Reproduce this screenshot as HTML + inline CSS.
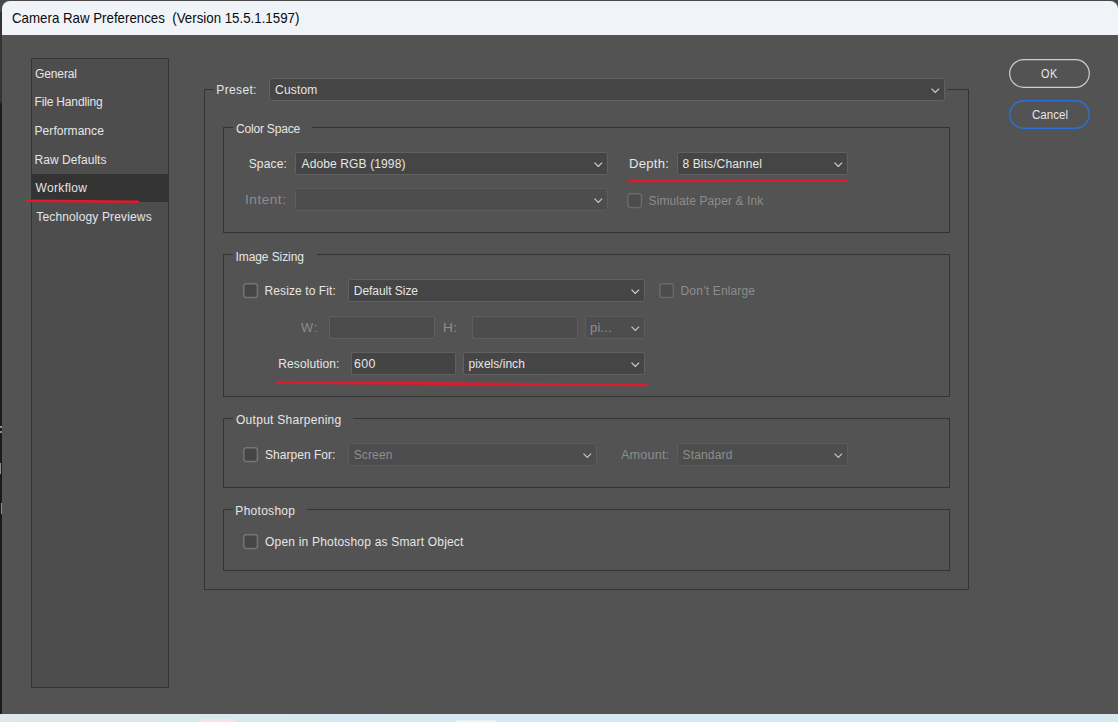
<!DOCTYPE html>
<html>
<head>
<meta charset="utf-8">
<title>Camera Raw Preferences</title>
<style>
html,body{margin:0;padding:0;}
body{width:1118px;height:722px;overflow:hidden;background:#484848;position:relative;
  font-family:"Liberation Sans",sans-serif;font-size:12px;color:#e6e6e6;}
.abs,.t,.dd,.inp,.cb,.grp,.gap,.btn{position:absolute;box-sizing:border-box;}
#leftedge{left:0;top:12px;width:2px;height:702px;background:linear-gradient(180deg,#333 0,#333 90px,#1b1b1b 92px);}
#leftedge i{position:absolute;left:0;width:2px;background:#8e8e8e;}
#bottom{left:0;top:714px;width:1118px;height:8px;background:linear-gradient(90deg,#dde7ec,#d7e8f0 40%,#d6e8f0);}
#win{left:2px;top:1px;width:1116px;height:713px;background:#535353;border-radius:8px 8px 0 0;overflow:hidden;}
#title{left:0;top:0;width:1116px;height:34px;background:#f0f4f9;}
.t{white-space:pre;line-height:16px;height:16px;}
.t.ttl{color:#0a0a0a;font-size:14.4px;}
.t.btxt{font-size:12.5px;}
.t.dis{color:#8d8d8d;}
#side{left:31px;top:58px;width:138px;height:630px;border:1px solid #343434;background:#4d4d4d;}
#sel{left:32px;top:174px;width:136px;height:28px;background:#333;}
.grp{border:1px solid #343434;}
.gap{background:#535353;}
.dd{background:#454545;border:1px solid #616161;border-radius:2.5px;}
.dd.d{background:#4d4d4d;border-color:#5c5c5c;}
.inp{background:#444;border:1px solid #5f5f5f;border-radius:1px;}
.inp.d{background:#4c4c4c;border-color:#5e5e5e;}
.cb{width:15px;height:15px;border:1px solid #7e7e7e;border-radius:3px;background:#454545;}
.cb.d{border-color:#6c6c6c;background:#4c4c4c;}
.dd svg{position:absolute;right:4px;top:50%;margin-top:-2px;width:9px;height:6px;}
.btn{width:81px;height:29px;border-radius:14.5px;}
svg.red{position:absolute;left:0;top:0;width:1118px;height:722px;pointer-events:none;}
</style>
</head>
<body>
<div class="abs" id="leftedge"><i style="top:414px;height:2px"></i><i style="top:419px;height:2px"></i><i style="top:451px;height:11px;width:1px;left:0"></i><i style="top:491px;height:11px;width:1px;left:1px"></i></div>
<div class="abs" id="bottom"><div class="abs" style="left:199px;top:5px;width:37px;height:6px;border-radius:4px 4px 0 0;background:#fbe1e4;"></div><div class="abs" style="left:455px;top:6px;width:42px;height:5px;border-radius:4px 4px 0 0;background:#e9f3f8;"></div></div>
<div class="abs" id="win"><div class="abs" id="title"></div></div>
<div class="abs" id="side"></div>
<div class="abs" id="sel"></div>
<div class="grp" id="g0" style="left:204px;top:89px;width:765px;height:501px;"></div><div class="gap" style="left:214px;top:89px;width:755px;height:1px;"></div>
<div class="abs" id="g0r" style="left:947px;top:89px;width:22px;height:1px;background:#343434;"></div>
<div class="dd" id="ddpreset" style="left:269px;top:78px;width:676px;height:23px;"><svg viewBox="0 0 9 6"><path d="M0.5 0.7 L4.3 4.4 L8.1 0.7" fill="none" stroke="#d6d6d6" stroke-width="1.12"/></svg></div>
<div class="grp" id="g1" style="left:223px;top:127px;width:727px;height:106px;"></div><div class="gap" style="left:233px;top:127px;width:79px;height:1px;"></div>
<div class="dd" id="ddspace" style="left:295px;top:152px;width:313px;height:23px;"><svg viewBox="0 0 9 6"><path d="M0.5 0.7 L4.3 4.4 L8.1 0.7" fill="none" stroke="#d6d6d6" stroke-width="1.12"/></svg></div>
<div class="dd" id="dddepth" style="left:677px;top:152px;width:171px;height:23px;"><svg viewBox="0 0 9 6"><path d="M0.5 0.7 L4.3 4.4 L8.1 0.7" fill="none" stroke="#d6d6d6" stroke-width="1.12"/></svg></div>
<div class="dd d" id="ddintent" style="left:295px;top:188px;width:313px;height:23px;"><svg viewBox="0 0 9 6"><path d="M0.5 0.7 L4.3 4.4 L8.1 0.7" fill="none" stroke="#cacaca" stroke-width="1.12"/></svg></div>
<svg class="abs" id="cbsim" style="left:627px;top:193px;width:16px;height:16px;" viewBox="0 0 16 16"><rect x="0.8" y="0.8" width="13.6" height="13.6" rx="2.3" fill="#4c4c4c" stroke="#696969" stroke-width="1.5"/></svg>
<div class="grp" id="g2" style="left:223px;top:254px;width:727px;height:143px;"></div><div class="gap" style="left:233px;top:254px;width:84px;height:1px;"></div>
<svg class="abs" id="cbresize" style="left:243px;top:283px;width:16px;height:16px;" viewBox="0 0 16 16"><rect x="0.8" y="0.8" width="13.6" height="13.6" rx="2.3" fill="#454545" stroke="#757575" stroke-width="1.5"/></svg>
<div class="dd" id="dddefault" style="left:348px;top:279px;width:297px;height:23px;"><svg viewBox="0 0 9 6"><path d="M0.5 0.7 L4.3 4.4 L8.1 0.7" fill="none" stroke="#d6d6d6" stroke-width="1.12"/></svg></div>
<svg class="abs" id="cbdont" style="left:659px;top:283px;width:16px;height:16px;" viewBox="0 0 16 16"><rect x="0.8" y="0.8" width="13.6" height="13.6" rx="2.3" fill="#4c4c4c" stroke="#696969" stroke-width="1.5"/></svg>
<div class="inp d" id="inw" style="left:329px;top:316px;width:106px;height:23px;"></div>
<div class="inp d" id="inh" style="left:472px;top:316px;width:106px;height:23px;"></div>
<div class="dd d" id="ddpi" style="left:585px;top:316px;width:60px;height:23px;"><svg viewBox="0 0 9 6"><path d="M0.5 0.7 L4.3 4.4 L8.1 0.7" fill="none" stroke="#cacaca" stroke-width="1.12"/></svg></div>
<div class="inp" id="inres" style="left:351px;top:352px;width:105px;height:23px;"></div>
<div class="dd" id="ddppi" style="left:463px;top:352px;width:182px;height:23px;"><svg viewBox="0 0 9 6"><path d="M0.5 0.7 L4.3 4.4 L8.1 0.7" fill="none" stroke="#d6d6d6" stroke-width="1.12"/></svg></div>
<div class="grp" id="g3" style="left:223px;top:418px;width:727px;height:70px;"></div><div class="gap" style="left:233px;top:418px;width:120px;height:1px;"></div>
<svg class="abs" id="cbsharp" style="left:243px;top:447px;width:16px;height:16px;" viewBox="0 0 16 16"><rect x="0.8" y="0.8" width="13.6" height="13.6" rx="2.3" fill="#454545" stroke="#757575" stroke-width="1.5"/></svg>
<div class="dd d" id="ddscreen" style="left:348px;top:443px;width:249px;height:23px;"><svg viewBox="0 0 9 6"><path d="M0.5 0.7 L4.3 4.4 L8.1 0.7" fill="none" stroke="#cacaca" stroke-width="1.12"/></svg></div>
<div class="dd d" id="ddstd" style="left:677px;top:443px;width:171px;height:23px;"><svg viewBox="0 0 9 6"><path d="M0.5 0.7 L4.3 4.4 L8.1 0.7" fill="none" stroke="#cacaca" stroke-width="1.12"/></svg></div>
<div class="grp" id="g4" style="left:223px;top:509px;width:727px;height:62px;"></div><div class="gap" style="left:233px;top:509px;width:74px;height:1px;"></div>
<svg class="abs" id="cbopen" style="left:243px;top:534px;width:16px;height:16px;" viewBox="0 0 16 16"><rect x="0.8" y="0.8" width="13.6" height="13.6" rx="2.3" fill="#454545" stroke="#757575" stroke-width="1.5"/></svg>
<svg class="abs" id="ok" style="left:1008px;top:58px;width:83px;height:31px;" viewBox="0 0 83 31"><rect x="1.7" y="1.7" width="79.6" height="27.6" rx="13.8" fill="none" stroke="#cecece" stroke-width="1.2"/></svg>
<svg class="abs" id="cancel" style="left:1008px;top:99px;width:83px;height:31px;" viewBox="0 0 83 31"><rect x="1.75" y="1.75" width="79.5" height="27.5" rx="13.75" fill="none" stroke="#2b6fdb" stroke-width="1.45"/></svg>
<div class="t ttl" id="titletxt" style="left:12.00px;top:10px;letter-spacing:0.000px;transform:scaleX(0.9235);transform-origin:0 0;">Camera Raw Preferences  (Version 15.5.1.1597)</div>
<div class="t " id="s1" style="left:35.05px;top:66px;letter-spacing:-0.125px;">General</div>
<div class="t " id="s2" style="left:34.55px;top:94px;letter-spacing:-0.169px;">File Handling</div>
<div class="t " id="s3" style="left:34.55px;top:123px;letter-spacing:0.060px;">Performance</div>
<div class="t " id="s4" style="left:34.55px;top:152px;letter-spacing:0.055px;">Raw Defaults</div>
<div class="t " id="s5" style="left:35.55px;top:180px;letter-spacing:0.335px;">Workflow</div>
<div class="t " id="s6" style="left:36.30px;top:209px;letter-spacing:0.145px;">Technology Previews</div>
<div class="t " id="preset" style="left:216.35px;top:82px;letter-spacing:0.348px;">Preset:</div>
<div class="t " id="custom" style="left:275.05px;top:82px;letter-spacing:0.190px;">Custom</div>
<div class="t " id="g1l" style="left:236.00px;top:121px;letter-spacing:-0.190px;">Color Space</div>
<div class="t " id="g2l" style="left:235.50px;top:249px;letter-spacing:-0.084px;">Image Sizing</div>
<div class="t " id="g3l" style="left:236.00px;top:412px;letter-spacing:0.279px;">Output Sharpening</div>
<div class="t " id="g4l" style="left:235.35px;top:503px;letter-spacing:0.281px;">Photoshop</div>
<div class="t " id="space" style="left:248.65px;top:156px;letter-spacing:0.170px;">Space:</div>
<div class="t " id="adobe" style="left:301.55px;top:156px;letter-spacing:0.124px;">Adobe RGB (1998)</div>
<div class="t " id="depth" style="left:629.00px;top:156px;letter-spacing:0.236px;transform:scaleX(1.09);transform-origin:0 0;">Depth:</div>
<div class="t " id="bits" style="left:682.55px;top:156px;letter-spacing:0.103px;">8 Bits/Channel</div>
<div class="t dis" id="intent" style="left:245.00px;top:192px;letter-spacing:0.479px;transform:scaleX(1.13);transform-origin:0 0;">Intent:</div>
<div class="t dis" id="simulate" style="left:648.60px;top:193px;letter-spacing:0.097px;">Simulate Paper &amp; Ink</div>
<div class="t " id="resize" style="left:264.55px;top:283px;letter-spacing:0.096px;">Resize to Fit:</div>
<div class="t " id="defsize" style="left:353.75px;top:283px;letter-spacing:-0.039px;">Default Size</div>
<div class="t dis" id="dont" style="left:680.55px;top:283px;letter-spacing:0.146px;">Don’t Enlarge</div>
<div class="t dis" id="wl" style="left:301.00px;top:320px;letter-spacing:0.701px;transform:scaleX(1.07);transform-origin:0 0;">W:</div>
<div class="t dis" id="hl" style="left:443.00px;top:320px;letter-spacing:0.264px;transform:scaleX(1.14);transform-origin:0 0;">H:</div>
<div class="t dis" id="pi" style="left:590.00px;top:320px;letter-spacing:0.211px;transform:scaleX(1.08);transform-origin:0 0;">pi...</div>
<div class="t " id="resolution" style="left:278.25px;top:356px;letter-spacing:0.115px;">Resolution:</div>
<div class="t " id="v600" style="left:354.00px;top:356px;letter-spacing:0.390px;transform:scaleX(1.03);transform-origin:0 0;">600</div>
<div class="t " id="ppi" style="left:468.45px;top:356px;letter-spacing:0.035px;">pixels/inch</div>
<div class="t " id="sharpen" style="left:265.05px;top:447px;letter-spacing:0.029px;">Sharpen For:</div>
<div class="t dis" id="screen" style="left:353.65px;top:447px;letter-spacing:0.150px;">Screen</div>
<div class="t dis" id="amount" style="left:621.40px;top:447px;letter-spacing:0.118px;transform:scaleX(1.06);transform-origin:0 0;">Amount:</div>
<div class="t dis" id="standard" style="left:682.60px;top:447px;letter-spacing:0.147px;">Standard</div>
<div class="t " id="open" style="left:265.05px;top:534px;letter-spacing:0.195px;">Open in Photoshop as Smart Object</div>
<div class="t btxt" id="oktxt" style="left:1040.50px;top:66px;letter-spacing:0.634px;transform:scaleX(0.87);transform-origin:0 0;">OK</div>
<div class="t btxt" id="canceltxt" style="left:1031.60px;top:107px;letter-spacing:0.044px;transform:scaleX(0.92);transform-origin:0 0;">Cancel</div>
<svg class="red" viewBox="0 0 1118 722">
  <path d="M27.6 200.7 L138 201.7" stroke="#e2192e" stroke-width="2.4" stroke-linecap="round" fill="none"/>
  <path d="M628.8 180.9 L846.7 180.5" stroke="#e2192e" stroke-width="2.7" stroke-linecap="round" fill="none"/>
  <path d="M276.7 382.4 L645.7 385.0" stroke="#e2192e" stroke-width="2.7" stroke-linecap="round" fill="none"/>
</svg>
</body>
</html>
